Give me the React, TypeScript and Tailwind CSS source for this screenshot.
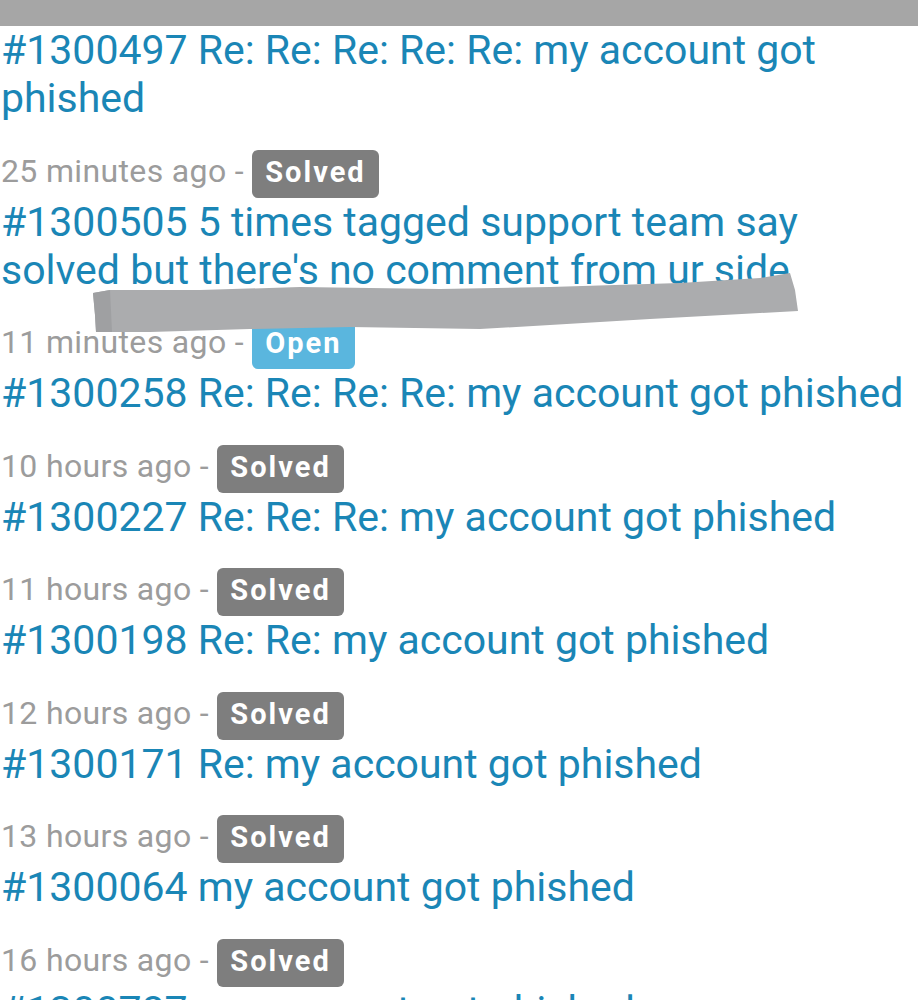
import React from 'react';

type Ticket = { id: string; subject: string; ago: string; status: 'Solved' | 'Open' };

const tickets: Ticket[] = [
  { id: '1300497', subject: 'Re: Re: Re: Re: Re: my account got phished', ago: '25 minutes ago', status: 'Solved' },
  { id: '1300505', subject: "5 times tagged support team say solved but there's no comment from ur side", ago: '11 minutes ago', status: 'Open' },
  { id: '1300258', subject: 'Re: Re: Re: Re: my account got phished', ago: '10 hours ago', status: 'Solved' },
  { id: '1300227', subject: 'Re: Re: Re: my account got phished', ago: '11 hours ago', status: 'Solved' },
  { id: '1300198', subject: 'Re: Re: my account got phished', ago: '12 hours ago', status: 'Solved' },
  { id: '1300171', subject: 'Re: my account got phished', ago: '13 hours ago', status: 'Solved' },
  { id: '1300064', subject: 'my account got phished', ago: '16 hours ago', status: 'Solved' },
  { id: '1300787', subject: 'my account got phished', ago: '17 hours ago', status: 'Solved' },
];

const Badge = ({ status }: { status: Ticket['status'] }) => (
  <span
    className={`inline-block h-[48px] rounded-[6px] px-[13px] pb-[4px] text-[29px] font-bold leading-[44px] tracking-[2px] text-white ${
      status === 'Open' ? 'bg-[#5ab6de]' : 'bg-[#7e7e7e]'
    }`}
  >
    {status}
  </span>
);

const Scribble = () => (
  <svg className="pointer-events-none absolute left-0 top-0" width="918" height="400" viewBox="0 0 918 400">
    <path
      d="M93 293 L110 290 L200 290 L300 287 L440 289 L550 287 L680 283 L760 278 L790 273 L795 290 L798 311 L760 313 L650 319 L550 325 L480 329 L350 327 L250 329 L150 332 L96 332 L95 315 Z"
      fill="#abacae"
    />
    <path d="M93 293 L110 290 L112 332 L96 332 L95 315 Z" fill="#9fa0a2" />
  </svg>
);

export default function App() {
  return (
    <div className="relative min-h-screen bg-white font-['Roboto',sans-serif]">
      <div className="h-[26px] bg-[#a6a6a6]" />
      <div className="pl-[1px]">
        {tickets.map((t) => (
          <div key={t.id}>
            <div className="text-[41px] leading-[48px] text-[#1a86b6]">
              #{t.id} {t.subject}
            </div>
            {t.id !== '1300787' && (
              <div className="mt-[27.5px] flex h-[48px] items-baseline">
                <span className="text-[32px] leading-[42px] tracking-[0.35px] text-[#9c9c9c]">{t.ago} -&nbsp;</span>
                <Badge status={t.status} />
              </div>
            )}
          </div>
        ))}
      </div>
      <Scribble />
    </div>
  );
}
